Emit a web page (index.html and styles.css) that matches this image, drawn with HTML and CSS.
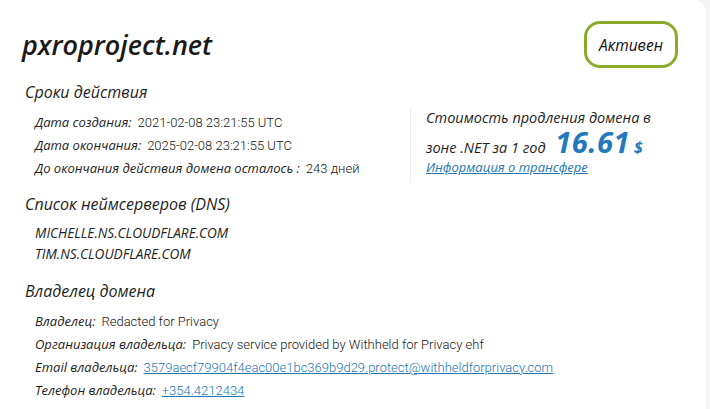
FILE: index.html
```html
<!DOCTYPE html>
<html lang="ru">
<head>
<meta charset="utf-8">
<link rel="stylesheet" href="styles.css">
</head>
<body>
<div class="card">
  <div class="header">
    <h1 class="domain">pxroproject.net</h1>
    <div class="badge">Активен</div>
  </div>
  <div class="top">
    <div class="left">
      <h2 class="heading">Сроки действия</h2>
      <div class="rows">
        <div class="row"><span class="label">Дата создания:</span><span class="val">2021-02-08 23:21:55 UTC</span></div>
        <div class="row"><span class="label">Дата окончания:</span><span class="val">2025-02-08 23:21:55 UTC</span></div>
        <div class="row"><span class="label">До окончания действия домена осталось :</span><span class="val">243 дней</span></div>
      </div>
    </div>
    <div class="price-box">
      <div class="p1">Стоимость продления домена в</div>
      <div class="p2">зоне .NET за 1 год <span class="price">16.61</span> <span class="cur">$</span></div>
      <a class="transfer" href="#">Информация о трансфере</a>
    </div>
  </div>
  <h2 class="heading h-dns">Список неймсерверов (DNS)</h2>
  <div class="ns">
    <div class="ns-row">MICHELLE.NS.CLOUDFLARE.COM</div>
    <div class="ns-row">TIM.NS.CLOUDFLARE.COM</div>
  </div>
  <h2 class="heading h-owner">Владелец домена</h2>
  <div class="rows owner">
    <div class="row"><span class="label">Владелец:</span><span class="val">Redacted for Privacy</span></div>
    <div class="row"><span class="label">Организация владельца:</span><span class="val">Privacy service provided by Withheld for Privacy ehf</span></div>
    <div class="row"><span class="label">Email владельца:</span><a class="val link" href="#">3579aecf79904f4eac00e1bc369b9d29.protect@withheldforprivacy.com</a></div>
    <div class="row"><span class="label">Телефон владельца:</span><a class="val link" href="#">+354.4212434</a></div>
  </div>
</div>
</body>
</html>
```
FILE: styles.css
```css
html, body {
  margin: 0;
  padding: 0;
}
body {
  background: #f4f4f4;
  width: 710px;
  height: 409px;
  overflow: hidden;
  font-family: "Open Sans", "Noto Sans", sans-serif;
  color: #1e1e1e;
}
.card {
  background: #fff;
  width: 706px;
  height: 409px;
  border-top-right-radius: 12px;
  box-sizing: border-box;
}
.header {
  display: flex;
  justify-content: space-between;
  align-items: center;
  padding: 21px 28px 0 22px;
}
.domain {
  margin: 0;
  font-size: 27px;
  font-style: italic;
  font-weight: 600;
  color: #1a1a1a;
  line-height: 30px;
}
.badge {
  box-sizing: border-box;
  width: 94px;
  height: 47px;
  border: 3px solid #8bac2a;
  border-radius: 16px;
  display: flex;
  align-items: center;
  justify-content: center;
  font-style: italic;
  font-size: 15.5px;
  font-weight: 500;
  color: #111;
}
.top {
  display: flex;
  align-items: flex-start;
}
.left {
  width: 410px;
}
.heading {
  margin: 12px 0 0 25px;
  font-size: 16px;
  font-weight: 400;
  font-style: italic;
  line-height: 24px;
}
.rows {
  padding: 7px 0 0 35px;
}
.row {
  line-height: 23px;
  font-size: 13px;
  white-space: nowrap;
}
.label {
  font-style: italic;
  margin-right: 6px;
}
.val {
  font-family: "Roboto", "Liberation Sans", sans-serif;
  font-weight: 300;
  color: #151515;
}
.price-box {
  margin-top: 40px;
  margin-bottom: -4px;
  height: 75px;
  border-left: 1px solid #eeeeee;
  padding-left: 15px;
  box-sizing: border-box;
}
.p1 {
  font-size: 14.5px;
  font-style: italic;
  font-weight: 500;
  line-height: 20px;
  height: 20px;
}
.p2 {
  font-size: 14.5px;
  font-style: italic;
  font-weight: 500;
  line-height: 28px;
  height: 30px;
  white-space: nowrap;
}
.price {
  font-family: "Open Sans", sans-serif;
  font-size: 29px;
  font-weight: 700;
  line-height: 28px;
  color: #2279bb;
  letter-spacing: 0.5px;
  margin-left: 6px;
}
.cur {
  font-size: 16px;
  font-weight: 700;
  color: #2279bb;
}
.transfer {
  display: block;
  font-size: 13px;
  font-style: italic;
  line-height: 18px;
  color: #2275b3;
  text-decoration: underline;
}
.h-dns {
  margin-top: 12px;
}
.ns {
  padding: 6px 0 0 35px;
}
.ns-row {
  font-size: 13.6px;
  font-style: italic;
  line-height: 21px;
  color: #222;
}
.h-owner {
  margin-top: 15px;
}
.owner {
  padding-top: 7px;
}
.link {
  color: #2275b3;
  text-decoration: underline;
}
```
